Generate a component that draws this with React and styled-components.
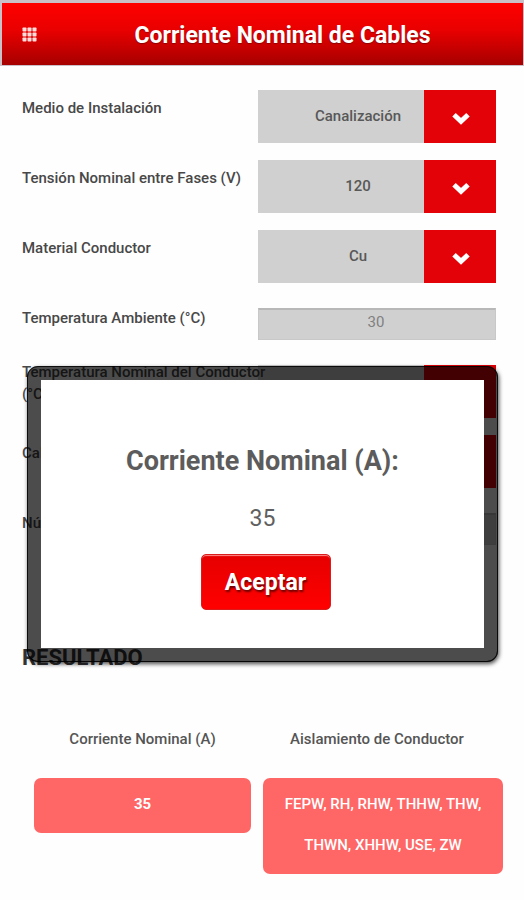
import React, { useState } from "react";
import styled, { createGlobalStyle } from "styled-components";

const GlobalStyle = createGlobalStyle`
  *, *::before, *::after { box-sizing: border-box; }
  body {
    margin: 0;
    background: #fefefe;
    color: #444;
    font-family: Roboto, "Liberation Sans", sans-serif;
    font-size: 15px;
    line-height: 22px;
  }
  button, input, select { font: inherit; margin: 0; }
`;

const Page = styled.div`
  position: relative;
  min-height: 100vh;
`;

const Header = styled.header`
  display: flex;
  align-items: center;
  height: 66px;
  border: solid #c9c0c8;
  border-width: 3px 1px 1px 2px;
  background: linear-gradient(#ff0000, #e80000 45%, #a60000);
`;

const MenuButton = styled.button`
  display: flex;
  flex: none;
  width: 40px;
  height: 40px;
  padding: 0 0 0 20px;
  align-items: center;
  border: 0;
  background: none;
`;

const Title = styled.h1`
  flex: 1;
  margin: 0;
  padding-top: 4px;
  color: #fff;
  font-size: 23px;
  font-weight: 700;
  line-height: 32px;
  text-align: center;
  text-shadow: 0 1px 1px rgba(90, 0, 0, 0.6);
`;

const Form = styled.form`
  display: flex;
  flex-direction: column;
  gap: 17px;
  padding: 24px 28px 0 22px;
`;

const Row = styled.div`
  display: grid;
  grid-template-columns: minmax(0, 236fr) minmax(0, 238fr);
  align-items: start;
  min-height: ${(p) => (p.$compact ? 48 : 53)}px;
`;

const Label = styled.label`
  z-index: 1;
  display: flex;
  align-items: center;
  height: 36px;
  color: #484848;
  font-weight: 500;
  white-space: pre;
`;

const SelectBox = styled.div`
  display: grid;
  grid-template-columns: minmax(0, 1fr) 72px;
  height: 53px;
`;

const Select = styled.select`
  grid-area: 1 / 1 / 2 / 3;
  appearance: none;
  width: 100%;
  padding: 0 38px 2px 0;
  border: 0;
  border-radius: 0;
  background: #d0d0d0;
  color: #585858;
  font-weight: 500;
  text-align: center;
  text-align-last: center;
`;

const Arrow = styled.span`
  grid-area: 1 / 2 / 2 / 3;
  display: flex;
  align-items: center;
  justify-content: center;
  padding: 4px 0 0 2px;
  background: #e20207;
  pointer-events: none;
`;

const NumberInput = styled.input`
  width: 100%;
  height: 32px;
  margin-top: 8px;
  padding: 0 2px 5px 0;
  border: 1px solid #c8c8c8;
  border-top: 2px solid #b8b8b8;
  border-radius: 0;
  background: #d0d0d0;
  color: #808080;
  text-align: center;
`;

const Results = styled.section`
  padding: 93px 21px 24px 22px;
`;

const ResultsTitle = styled.h2`
  margin: 0;
  color: #333;
  font-size: 22px;
  font-weight: 700;
  line-height: 24px;
`;

const ResultGrid = styled.div`
  display: grid;
  grid-template-columns: minmax(0, 217fr) minmax(0, 240fr);
  gap: 28px 12px;
  align-items: start;
  padding: 58px 0 0 12px;
`;

const ResultLabel = styled.div`
  padding-right: ${(p) => (p.$inset ? 12 : 0)}px;
  color: #555;
  font-weight: 500;
  text-align: center;
`;

const ResultValue = styled.output`
  display: block;
  padding: 6px 20px 8px;
  border-radius: 7px;
  background: #ff6666;
  color: #fff;
  font-weight: ${(p) => (p.$strong ? 700 : 500)};
  line-height: 41px;
  text-align: center;
`;

const Overlay = styled.div`
  position: absolute;
  z-index: 2;
  inset: 0;
  padding: 366px 26px 0 27px;
`;

const Dialog = styled.section`
  display: flex;
  flex-direction: column;
  align-items: center;
  min-height: 296px;
  padding: 65px 16px 38px;
  border: 14px solid rgba(0, 0, 0, 0.7);
  border-radius: 11px;
  background: #fff;
  background-clip: padding-box;
  box-shadow: 1px 2px 4px rgba(0, 0, 0, 0.7);
  outline: 1px solid rgba(0, 0, 0, 0.75);
  outline-offset: -1px;
`;

const DialogTitle = styled.h2`
  margin: 0;
  color: #5c5c5c;
  font-size: 27px;
  font-weight: 700;
  line-height: 32px;
`;

const DialogValue = styled.p`
  margin: 26px 0 19px;
  color: #606060;
  font-size: 23px;
  line-height: 32px;
`;

const AcceptButton = styled.button`
  width: 130px;
  height: 56px;
  margin-left: 6px;
  padding: 2px 0 0;
  border: 1px solid #d91c1c;
  border-radius: 5px;
  background: linear-gradient(#e60000, #ff0000);
  box-shadow: inset 0 2px 1px -1px #ff8a8a;
  color: #fff;
  font-size: 23px;
  font-weight: 700;
  text-shadow: 1px 2px 2px rgba(70, 0, 0, 0.8);
`;

function GridIcon() {
  const steps = [0, 5, 10];
  return (
    <svg width="15" height="15" viewBox="0 0 15 15" fill="#ffdcdc" aria-hidden="true">
      {steps.map((y) => steps.map((x) => (
        <rect key={`${x}-${y}`} x={x + 0.5} y={y + 0.5} width="4" height="4" rx="0.8" />
      )))}
    </svg>
  );
}

function Chevron() {
  return (
    <svg width="18" height="13" viewBox="0 0 18 13" aria-hidden="true">
      <path d="M2 2.8 9 9.4 16 2.8" fill="none" stroke="#fff" strokeWidth="5" />
    </svg>
  );
}

function SelectField({ id, label, options }) {
  return (
    <Row>
      <Label htmlFor={id}>{label}</Label>
      <SelectBox>
        <Select id={id}>
          {options.map((o) => <option key={o}>{o}</option>)}
        </Select>
        <Arrow><Chevron /></Arrow>
      </SelectBox>
    </Row>
  );
}

function NumberField({ id, label, value }) {
  return (
    <Row $compact>
      <Label htmlFor={id}>{label}</Label>
      <NumberInput id={id} inputMode="numeric" defaultValue={value} />
    </Row>
  );
}

export default function App() {
  const [open, setOpen] = useState(true);
  return (
    <>
      <GlobalStyle />
      <Page>
        <Header>
          <MenuButton type="button" aria-label="Menú"><GridIcon /></MenuButton>
          <Title>Corriente Nominal de Cables</Title>
        </Header>
        <Form>
          <SelectField id="medio" label="Medio de Instalación" options={["Canalización"]} />
          <SelectField id="tension" label="Tensión Nominal entre Fases (V)" options={["120"]} />
          <SelectField id="material" label="Material Conductor" options={["Cu"]} />
          <NumberField id="ambiente" label="Temperatura Ambiente (°C)" value="30" />
          <SelectField id="nominal" label={"Temperatura Nominal del Conductor\n(°C)"} options={["75"]} />
          <SelectField id="calibre" label="Calibre" options={["10"]} />
          <NumberField id="numero" label="Número" value="3" />
        </Form>
        <Results>
          <ResultsTitle>RESULTADO</ResultsTitle>
          <ResultGrid>
            <ResultLabel>Corriente Nominal (A)</ResultLabel>
            <ResultLabel $inset>Aislamiento de Conductor</ResultLabel>
            <ResultValue $strong>35</ResultValue>
            <ResultValue>FEPW, RH, RHW, THHW, THW, THWN, XHHW, USE, ZW</ResultValue>
          </ResultGrid>
        </Results>
        {open && (
          <Overlay>
            <Dialog role="dialog" aria-labelledby="dialog-title">
              <DialogTitle id="dialog-title">Corriente Nominal (A):</DialogTitle>
              <DialogValue>35</DialogValue>
              <AcceptButton type="button" onClick={() => setOpen(false)}>Aceptar</AcceptButton>
            </Dialog>
          </Overlay>
        )}
      </Page>
    </>
  );
}
